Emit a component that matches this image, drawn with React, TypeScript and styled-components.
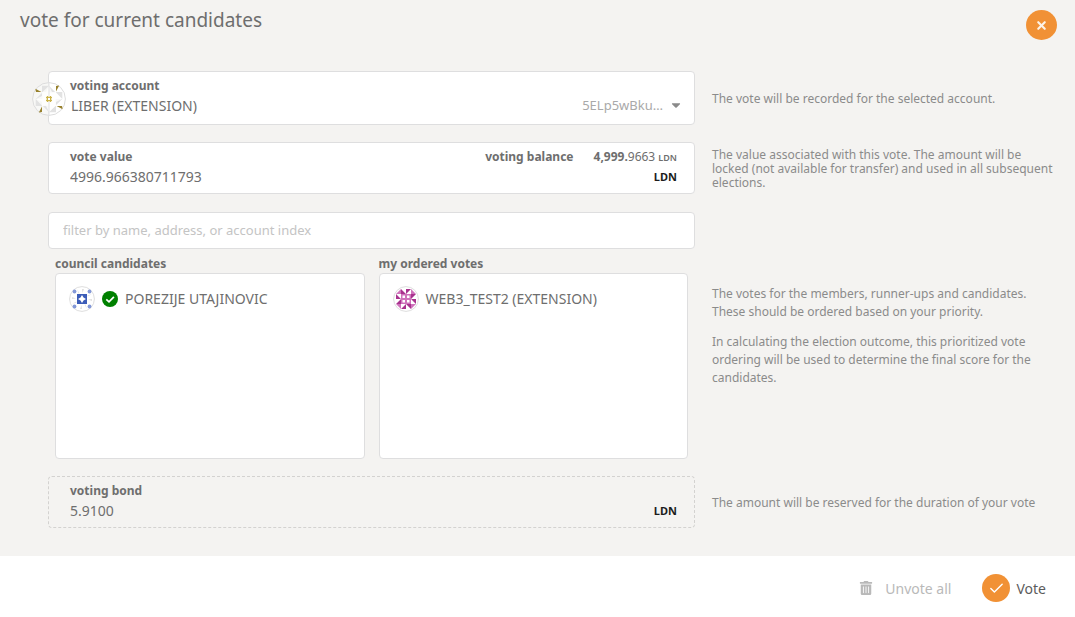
import React, { useState } from 'react';
import styled, { createGlobalStyle } from 'styled-components';
import { FaTrashAlt, FaCaretDown } from 'react-icons/fa';
import { Check, X } from 'lucide-react';

const GlobalStyle = createGlobalStyle`
  * { box-sizing: border-box; }
  body {
    margin: 0;
    background: #fff;
    color: #6e6e6e;
    font-family: "Noto Sans", sans-serif;
    font-size: 14px;
  }
  button, input, select { font: inherit; color: inherit; }
`;

const Header = styled.header`
  display: flex;
  justify-content: space-between;
  align-items: flex-start;
  height: 71px;
  padding: 8px 18px 0 20px;
`;

const Title = styled.h1`
  margin: 0;
  font-size: 19px;
  line-height: 24px;
  font-weight: 400;
`;

const CloseButton = styled.button`
  display: flex;
  align-items: center;
  justify-content: center;
  width: 31px;
  height: 30px;
  margin-top: 2px;
  padding: 0;
  border: 0;
  border-radius: 50%;
  background: #f19135;
  color: #fdf3e8;
  cursor: pointer;
`;

const Modal = styled.main`
  background: #f4f3f1;
  padding-bottom: 28px;
`;

const Rows = styled.div`
  display: flex;
  flex-direction: column;
  gap: 17px;
  padding: 0 20px 0 48px;
`;

const Row = styled.section`
  display: grid;
  grid-template-columns: 647fr 343fr;
  column-gap: 17px;
  align-items: center;
`;

const Help = styled.div<{ $leading?: number }>`
  padding-top: 2px;
  color: #8b8b8b;
  font-size: 12px;
  line-height: ${(p) => p.$leading ?? 14}px;
  p { margin: 0 0 12px; }
  p:last-child { margin: 0; }
`;

const Field = styled.div<{ $dashed?: boolean; $height?: number }>`
  position: relative;
  min-height: ${(p) => p.$height ?? 52}px;
  padding: 5px 17px 0 21px;
  border: 1px ${(p) => (p.$dashed ? 'dashed #d3d2d0' : 'solid #dededf')};
  border-radius: 4px;
  background: ${(p) => (p.$dashed ? 'transparent' : '#fff')};
`;

const Line = styled.div`
  display: flex;
  align-items: center;
  height: 18px;
`;

const ValueLine = styled(Line)`
  height: 20px;
`;

const Label = styled.label`
  font-size: 12px;
  line-height: 16px;
  font-weight: 700;
`;

const Balance = styled.div`
  display: flex;
  align-items: baseline;
  gap: 20px;
  margin-left: auto;
  font-size: 12px;
  line-height: 16px;
  small { font-size: 9px; font-weight: 600; }
`;

const TextInput = styled.input`
  flex: 1;
  min-width: 0;
  height: 20px;
  padding: 0;
  border: 0;
  outline: 0;
  background: transparent;
`;

const Unit = styled.span`
  color: #1c1c1c;
  font-size: 11px;
  font-weight: 700;
`;

const AccountSelect = styled.select`
  flex: 1;
  min-width: 0;
  height: 20px;
  padding: 0 0 0 1px;
  border: 0;
  outline: 0;
  appearance: none;
  background: transparent;
`;

const AccountLine = styled(Line)`
  height: 20px;
  margin-right: -6px;
`;

const Address = styled.span`
  margin-right: 6px;
  color: #a9a9a9;
  font-size: 13px;
  line-height: 20px;
`;

const AccountIcon = styled.span`
  position: absolute;
  left: -17px;
  top: 10px;
  display: flex;
`;

const Voting = styled.div`
  padding-top: 1px;
`;

const Filter = styled.input`
  display: block;
  width: 100%;
  height: 37px;
  padding: 0 14px 2px;
  border: 1px solid #dededf;
  border-radius: 4px;
  outline: 0;
  background: #fff;
  font-size: 13px;
  &::placeholder { color: #c4c4c4; opacity: 1; }
`;

const Lists = styled.div`
  display: grid;
  grid-template-columns: 1fr 1fr;
  gap: 14px;
  padding: 7px 7px 0;
`;

const ListTitle = styled.h2`
  margin: 0 0 1px;
  font-size: 12px;
  line-height: 16px;
  font-weight: 700;
`;

const List = styled.ul`
  height: 186px;
  margin: 0;
  padding: 12px 13px;
  border: 1px solid #dededf;
  border-radius: 4px;
  background: #fff;
  list-style: none;
`;

const Item = styled.li`
  display: flex;
  align-items: center;
  gap: 7px;
  line-height: 26px;
`;

const Footer = styled.footer`
  display: flex;
  justify-content: flex-end;
  align-items: center;
  gap: 31px;
  padding: 18px 29px;
`;

const Action = styled.button<{ $gap: number }>`
  display: flex;
  align-items: center;
  gap: ${(p) => p.$gap}px;
  padding: 0;
  border: 0;
  background: transparent;
  color: #5c5c5c;
  cursor: pointer;
  &:disabled { color: #b9b9b9; cursor: default; }
`;

const Disc = styled.span`
  display: flex;
  align-items: center;
  justify-content: center;
  width: 28px;
  height: 28px;
  border-radius: 50%;
  background: #f19135;
  color: #fff;
`;

const quarters = [0, 90, 180, 270];

const GoldIdenticon = () => (
  <svg width="34" height="34" viewBox="-17 -17 34 34" aria-hidden="true">
    <circle r="16.4" fill="#fff" fillOpacity="0.4" stroke="#dcdcdc" />
    {quarters.map((a) => (
      <g key={a} transform={`rotate(${a})`}>
        <path d="M-7 -13.300H0L-7 -6.600ZM0 -13.300L6.600 -6.600H0Z" fill="#e2e2e2" />
        <path d="M-13.600 -10.200L-7.600 -7H-13Z" fill="#98812c" />
      </g>
    ))}
    <path d="M0 -13L3 -7H7V-3L13 0L7 3V7H3L0 13L-3 7H-7V3L-13 0L-7 -3V-7H-3Z" fill="#fff" fillOpacity="0.8" />
    <path d="M0 -17V-3M0 3V17" stroke="#e2e2e2" />
    <path d="M-2.500 -2.500H2.500V2.500H-2.500Z" fill="#dccb7c" />
    <path d="M-1.500 -3V3M1.500 -3V3M-3 -1.500H3M-3 1.500H3" stroke="#cbb34a" />
    <path d="M-1 -1H1V1H-1Z" fill="#fff" />
  </svg>
);

const BlueIdenticon = () => (
  <svg width="26" height="26" viewBox="-13 -13 26 26" aria-hidden="true">
    <circle r="12.4" fill="#fff" stroke="#dedede" />
    {quarters.map((a) => (
      <g key={a} transform={`rotate(${a})`}>
        <circle cx="-7.500" cy="-7.500" r="1.900" fill="#8499d8" />
        <path d="M-5 -10L-2.500 -5.500H-3.500ZM0 -10H2L0.500 -6Z" fill="#e0e0e0" />
      </g>
    ))}
    <path d="M-5 -5H5V5H-5Z" fill="#3b5cb8" />
    <path d="M0 -4L1.500 -1.500L4 0L1.500 1.500L0 4L-1.500 1.500L-4 0L-1.500 -1.500Z" fill="#fff" />
  </svg>
);

const PinkIdenticon = () => (
  <svg width="26" height="26" viewBox="-13 -13 26 26" aria-hidden="true">
    <circle r="12.4" fill="#fff" stroke="#dedede" />
    {quarters.map((a) => (
      <g key={a} transform={`rotate(${a})`}>
        <path d="M-10 -5L-5 -10V-5Z" fill="#cf72bb" />
        <path d="M-5 -10L0 -5H-5ZM0 -10H5L0 -5Z" fill="#a8328e" />
      </g>
    ))}
    <path d="M-5 -5H5V5H-5Z" fill="#cf72bb" />
    <path d="M-3.500 -3.500H-1V-1H-3.500ZM1 -3.500H3.500V-1H1ZM-3.500 1H-1V3.500H-3.500ZM1 1H3.500V3.500H1Z" fill="#fff" />
  </svg>
);

const VerifiedIcon = () => (
  <svg width="16" height="16" viewBox="0 0 16 16" role="img" aria-label="verified">
    <circle cx="8" cy="8" r="8" fill="#008000" />
    <path d="M4.300 8.300L7 10.900L11.900 5.800" fill="none" stroke="#fff" strokeWidth="1.700" />
  </svg>
);

export default function App() {
  const [value, setValue] = useState('4996.966380711793');
  const [filter, setFilter] = useState('');

  return (
    <>
      <GlobalStyle />
      <Modal>
        <Header>
          <Title>vote for current candidates</Title>
          <CloseButton type="button" aria-label="Close"><X size={13} strokeWidth={4} /></CloseButton>
        </Header>
        <Rows>
          <Row>
            <Field $height={54}>
              <AccountIcon><GoldIdenticon /></AccountIcon>
              <Line><Label htmlFor="account">voting account</Label></Line>
              <AccountLine>
                <AccountSelect id="account">
                  <option>LIBER (EXTENSION)</option>
                </AccountSelect>
                <Address>5ELp5wBku…</Address>
                <FaCaretDown size={14} color="#8a8a8a" />
              </AccountLine>
            </Field>
            <Help>The vote will be recorded for the selected account.</Help>
          </Row>
          <Row>
            <Field>
              <Line>
                <Label htmlFor="value">vote value</Label>
                <Balance>
                  <b>voting balance</b>
                  <span><b>4,999.</b>9663 <small>LDN</small></span>
                </Balance>
              </Line>
              <ValueLine>
                <TextInput id="value" value={value} onChange={(e) => setValue(e.target.value)} />
                <Unit>LDN</Unit>
              </ValueLine>
            </Field>
            <Help>
              The value associated with this vote. The amount will be locked (not available for
              transfer) and used in all subsequent elections.
            </Help>
          </Row>
          <Row>
            <Voting>
              <Filter
                aria-label="filter candidates"
                placeholder="filter by name, address, or account index"
                value={filter}
                onChange={(e) => setFilter(e.target.value)}
              />
              <Lists>
                <div>
                  <ListTitle>council candidates</ListTitle>
                  <List>
                    <Item><BlueIdenticon /><VerifiedIcon />POREZIJE UTAJINOVIC</Item>
                  </List>
                </div>
                <div>
                  <ListTitle>my ordered votes</ListTitle>
                  <List>
                    <Item><PinkIdenticon />WEB3_TEST2 (EXTENSION)</Item>
                  </List>
                </div>
              </Lists>
            </Voting>
            <Help $leading={18}>
              <p>The votes for the members, runner-ups and candidates. These should be ordered based on your priority.</p>
              <p>In calculating the election outcome, this prioritized vote ordering will be used to determine the final score for the candidates.</p>
            </Help>
          </Row>
          <Row>
            <Field $dashed>
              <Line><Label htmlFor="bond">voting bond</Label></Line>
              <ValueLine>
                <TextInput id="bond" value="5.9100" readOnly />
                <Unit>LDN</Unit>
              </ValueLine>
            </Field>
            <Help>The amount will be reserved for the duration of your vote</Help>
          </Row>
        </Rows>
      </Modal>
      <Footer>
        <Action type="button" $gap={12} disabled><FaTrashAlt size={14} />Unvote all</Action>
        <Action type="button" $gap={6}><Disc><Check size={17} strokeWidth={2} /></Disc>Vote</Action>
      </Footer>
    </>
  );
}
